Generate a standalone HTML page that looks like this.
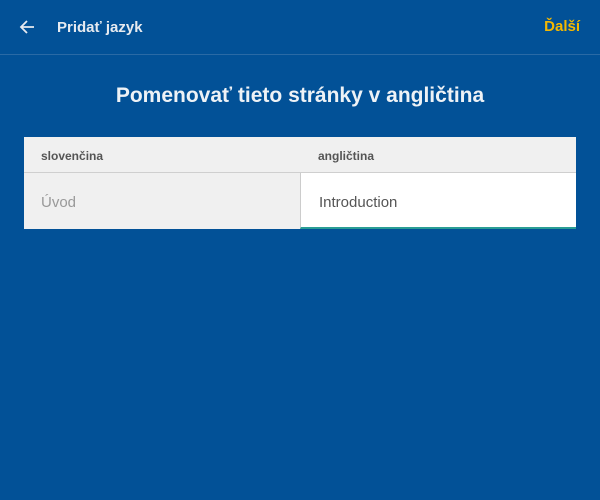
<!DOCTYPE html>
<html><head><meta charset="utf-8"><style>
*{margin:0;padding:0;box-sizing:border-box}
body{width:600px;height:500px;background:#025197;font-family:"Liberation Sans",Arial,sans-serif;position:relative;overflow:hidden}
.bar{position:absolute;left:0;top:0;width:600px;height:55px;border-bottom:1px solid #2a6aa5}
.title{position:absolute;left:57px;top:19px;color:#e6eaf0;font-size:15px;font-weight:bold}
.next{position:absolute;right:20px;top:18px;color:#f5b800;font-size:15px;font-weight:bold}
h1{position:absolute;top:84px;left:0;width:600px;text-align:center;color:#eef2f6;font-size:21px;font-weight:bold}
.tbl{position:absolute;left:24px;top:137px;width:552px;height:92px;background:#f0f0f0}
.hd{position:absolute;top:0;height:36px;border-bottom:1px solid #cfcfcf;width:552px}
.h{position:absolute;top:12px;font-size:12px;font-weight:bold;color:#555}
.l{position:absolute;left:17px;top:57px;font-size:15px;color:#999}
.r{position:absolute;left:276px;top:36px;width:276px;height:56px;background:#fff;border-left:1px solid #ccc;border-bottom:2px solid #2a9d95}
.r span{position:absolute;left:18px;top:21px;font-size:15px;color:#555}
</style></head><body>
<div class="bar">
<svg style="position:absolute;left:19px;top:19px" width="16" height="16" viewBox="0 0 16 16"><path d="M15 8H2M8 2L2 8l6 6" stroke="#e6eaf0" stroke-width="1.8" fill="none"/></svg>
<div class="title">Pridať jazyk</div>
<div class="next">Ďalší</div>
</div>
<h1>Pomenovať tieto stránky v angličtina</h1>
<div class="tbl">
<div class="hd"><div class="h" style="left:17px">slovenčina</div><div class="h" style="left:294px">angličtina</div></div>
<div class="l">Úvod</div>
<div class="r"><span>Introduction</span></div>
</div>
</body></html>
